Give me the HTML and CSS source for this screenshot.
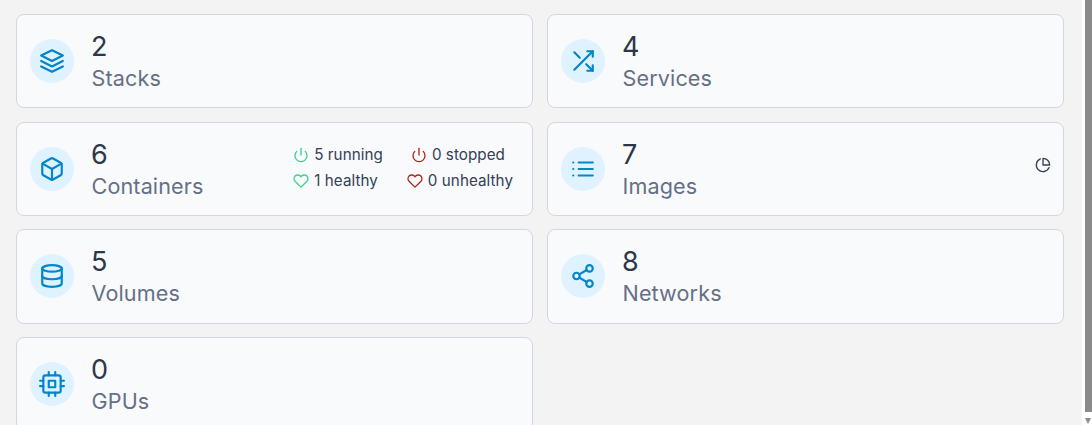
FILE: index.html
```html
<!DOCTYPE html>
<html lang="en">
<head>
  <meta charset="UTF-8" />
  <title>Dashboard</title>
  <link rel="stylesheet" href="styles.css">
</head>
<body>
  <div class="page">
    <div class="grid">

      <div class="card">
        <div class="icon-circle">
          <svg class="icon" viewBox="0 0 24 24"><path d="M12 2 2 7l10 5 10-5-10-5z"/><path d="m2 17 10 5 10-5"/><path d="m2 12 10 5 10-5"/></svg>
        </div>
        <div class="info"><div class="num">2</div><div class="label">Stacks</div></div>
      </div>

      <div class="card">
        <div class="icon-circle">
          <svg class="icon" viewBox="0 0 24 24"><path d="M16 3h5v5"/><path d="M4 20 21 3"/><path d="M21 16v5h-5"/><path d="m15 15 6 6"/><path d="M4 4l5 5"/></svg>
        </div>
        <div class="info"><div class="num">4</div><div class="label">Services</div></div>
      </div>

      <div class="card">
        <div class="icon-circle">
          <svg class="icon" viewBox="0 0 24 24"><path d="M21 16V8a2 2 0 0 0-1-1.73l-7-4a2 2 0 0 0-2 0l-7 4A2 2 0 0 0 3 8v8a2 2 0 0 0 1 1.73l7 4a2 2 0 0 0 2 0l7-4A2 2 0 0 0 21 16z"/><path d="M3.3 7 12 12l8.7-5"/><path d="M12 22V12"/></svg>
        </div>
        <div class="info"><div class="num">6</div><div class="label">Containers</div></div>
        <div class="stats">
          <div class="stat">
            <svg class="stat-icon good" viewBox="0 0 24 24"><path d="M18.4 6.6a9 9 0 1 1-12.8 0"/><path d="M12 2v10"/></svg>
            <span>5 running</span>
          </div>
          <div class="stat">
            <svg class="stat-icon bad" viewBox="0 0 24 24"><path d="M18.4 6.6a9 9 0 1 1-12.8 0"/><path d="M12 2v10"/></svg>
            <span>0 stopped</span>
          </div>
          <div class="stat">
            <svg class="stat-icon good" viewBox="0 0 24 24"><path d="M20.8 4.6a5.5 5.5 0 0 0-7.8 0L12 5.7l-1-1.1a5.5 5.5 0 0 0-7.8 7.8l1 1L12 21.2l7.8-7.8 1-1a5.5 5.5 0 0 0 0-7.8z"/></svg>
            <span>1 healthy</span>
          </div>
          <div class="stat">
            <svg class="stat-icon bad" viewBox="0 0 24 24"><path d="M20.8 4.6a5.5 5.5 0 0 0-7.8 0L12 5.7l-1-1.1a5.5 5.5 0 0 0-7.8 7.8l1 1L12 21.2l7.8-7.8 1-1a5.5 5.5 0 0 0 0-7.8z"/></svg>
            <span>0 unhealthy</span>
          </div>
        </div>
      </div>

      <div class="card">
        <div class="icon-circle">
          <svg class="icon" viewBox="0 0 24 24"><path d="M8 6h13"/><path d="M8 12h13"/><path d="M8 18h13"/><path d="M3 6h.01"/><path d="M3 12h.01"/><path d="M3 18h.01"/></svg>
        </div>
        <div class="info"><div class="num">7</div><div class="label">Images</div></div>
        <svg class="usage" viewBox="0 0 24 24"><path d="M21.2 15.9A10 10 0 1 1 8 2.8"/><path d="M22 12A10 10 0 0 0 12 2v10z"/></svg>
      </div>

      <div class="card">
        <div class="icon-circle">
          <svg class="icon" viewBox="0 0 24 24"><ellipse cx="12" cy="5" rx="9" ry="3"/><path d="M21 12c0 1.7-4 3-9 3s-9-1.3-9-3"/><path d="M3 5v14c0 1.7 4 3 9 3s9-1.3 9-3V5"/></svg>
        </div>
        <div class="info"><div class="num">5</div><div class="label">Volumes</div></div>
      </div>

      <div class="card">
        <div class="icon-circle">
          <svg class="icon" viewBox="0 0 24 24"><circle cx="18" cy="5" r="3"/><circle cx="6" cy="12" r="3"/><circle cx="18" cy="19" r="3"/><path d="m8.6 13.5 6.8 4"/><path d="m15.4 6.5-6.8 4"/></svg>
        </div>
        <div class="info"><div class="num">8</div><div class="label">Networks</div></div>
      </div>

      <div class="card">
        <div class="icon-circle">
          <svg class="icon" viewBox="0 0 24 24"><rect x="4" y="4" width="16" height="16" rx="2"/><rect x="9" y="9" width="6" height="6"/><path d="M9 1v3"/><path d="M15 1v3"/><path d="M9 20v3"/><path d="M15 20v3"/><path d="M20 9h3"/><path d="M20 14h3"/><path d="M1 9h3"/><path d="M1 14h3"/></svg>
        </div>
        <div class="info"><div class="num">0</div><div class="label">GPUs</div></div>
      </div>

    </div>
  </div>
  <div class="scrollbar">
    <div class="scroll-thumb"></div>
    <div class="scroll-arrow"></div>
  </div>
</body>
</html>
```

FILE: styles.css
```css
html,
body {
  height: 100%;
  overflow: hidden;
}

body {
  margin: 0;
  background: #f3f3f3;
  font-family: 'Inter', sans-serif;
  color: #2d3748;
}

.page {
  padding: 14px 28px 0 16px;
}

.grid {
  display: grid;
  grid-template-columns: 1fr 1fr;
  gap: 13.33px 14px;
}

.card {
  display: flex;
  align-items: center;
  box-sizing: border-box;
  height: 94.33px;
  padding: 0 13px 0 13px;
  background: #f9fafc;
  border: 1px solid #d2d6e3;
  border-radius: 8px;
}

.icon-circle {
  display: flex;
  align-items: center;
  justify-content: center;
  flex: none;
  width: 44px;
  height: 44px;
  margin-right: 18px;
  background: #dff2ff;
  border-radius: 50%;
}

.icon {
  width: 26px;
  height: 26px;
  fill: none;
  stroke: #0086c9;
  stroke-width: 2;
  stroke-linecap: round;
  stroke-linejoin: round;
}

.info {
  flex: 1;
  padding-top: 2px;
}

.num {
  margin-left: -1px;
  font-size: 27px;
  line-height: 32px;
  font-weight: 400;
}

.label {
  margin-left: -0.5px;
  font-size: 21.6px;
  line-height: 30px;
  letter-spacing: 0.12px;
  color: #667085;
}

.stats {
  display: grid;
  grid-template-columns: auto auto;
  column-gap: 24px;
  margin: 0 6px 2px 0;
  font-size: 15.2px;
  line-height: 26px;
  letter-spacing: 0.06px;
  color: #344054;
}

.stat {
  display: flex;
  align-items: center;
  gap: 5px;
}

.stat:nth-child(2) {
  justify-content: center;
  padding-right: 4px;
}

.stat-icon {
  width: 16px;
  height: 16px;
  fill: none;
  stroke-width: 2;
  stroke-linecap: round;
  stroke-linejoin: round;
}

.good {
  stroke: #3bd18f;
}

.bad {
  stroke: #b42318;
}

.usage {
  align-self: flex-start;
  flex: none;
  width: 16px;
  height: 16px;
  margin: 34px -1px 0 0;
  fill: none;
  stroke: #344054;
  stroke-width: 2;
  stroke-linecap: round;
  stroke-linejoin: round;
}

/* classic scrollbar sitting on the window edge */
.scrollbar {
  position: absolute;
  top: 0;
  right: 0;
  bottom: 0;
  width: 10px;
  background: #fff;
}

.scroll-thumb {
  position: absolute;
  top: 0;
  left: 3px;
  right: 0;
  bottom: 13px;
  background: #8a8a8a;
}

.scroll-arrow {
  position: absolute;
  left: 3px;
  bottom: 1px;
  border-left: 3.5px solid transparent;
  border-right: 3.5px solid transparent;
  border-top: 6px solid #8a8a8a;
}
```
